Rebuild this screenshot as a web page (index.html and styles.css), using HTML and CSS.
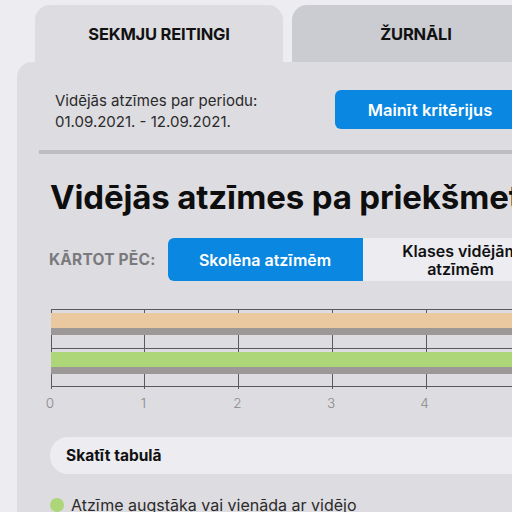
FILE: index.html
```html
<!DOCTYPE html>
<html lang="lv">
<head>
<meta charset="utf-8">
<title>Sekmju reitingi</title>
<link rel="stylesheet" href="styles.css">
</head>
<body>
<div class="page">
  <div class="tabs">
    <div class="tab tab-active">SEKMJU REITINGI</div>
    <div class="tab tab-inactive">ŽURNĀLI</div>
  </div>
  <div class="panel">
    <div class="period-row">
      <div class="period-text">Vidējās atzīmes par periodu:<br>01.09.2021. - 12.09.2021.</div>
      <button class="btn-primary">Mainīt kritērijus</button>
    </div>
    <div class="divider"></div>
    <h1 class="heading">Vidējās atzīmes pa priekšmetiem</h1>
    <div class="sort-row">
      <span class="sort-label">KĀRTOT PĒC:</span>
      <div class="segment">
        <div class="seg seg-on">Skolēna atzīmēm</div>
        <div class="seg seg-off">Klases vidējām<br>atzīmēm</div>
      </div>
    </div>
    <svg class="chart" width="490" height="115" viewBox="0 0 490 115">
      <g stroke="#5a5a5a" stroke-width="1">
        <line x1="10" y1="9.5" x2="490" y2="9.5"/>
        <line x1="10" y1="48.5" x2="490" y2="48.5"/>
        <line x1="10" y1="86.5" x2="490" y2="86.5"/>
        <line x1="10.5" y1="9" x2="10.5" y2="89"/>
        <line x1="103.5" y1="9" x2="103.5" y2="89"/>
        <line x1="197.5" y1="9" x2="197.5" y2="89"/>
        <line x1="291.5" y1="9" x2="291.5" y2="89"/>
        <line x1="385.5" y1="9" x2="385.5" y2="89"/>
        <line x1="479.5" y1="9" x2="479.5" y2="89"/>
      </g>
      <rect x="10" y="13" width="480" height="15" fill="#eac9a0"/>
      <rect x="10" y="28" width="480" height="7" fill="#9b9897"/>
      <rect x="10" y="52" width="480" height="15" fill="#acd677"/>
      <rect x="10" y="67" width="480" height="7" fill="#9b9897"/>
      <g class="axis-labels" fill="#8a8a8a" text-anchor="middle">
        <text x="9" y="108">0</text>
        <text x="102.5" y="108">1</text>
        <text x="196.5" y="108">2</text>
        <text x="290" y="108">3</text>
        <text x="383.5" y="108">4</text>
        <text x="477.5" y="108">5</text>
      </g>
    </svg>
    <div class="table-toggle">Skatīt tabulā</div>
    <div class="legend">
      <span class="dot"></span>
      <span class="legend-text">Atzīme augstāka vai vienāda ar vidējo</span>
    </div>
  </div>
</div>
</body>
</html>
```

FILE: styles.css
```css
html, body {
  margin: 0;
  padding: 0;
}
body {
  background: #ececf1;
  font-family: Inter, "Noto Sans", "Liberation Sans", sans-serif;
  color: #111;
  width: 512px;
  height: 512px;
  overflow: hidden;
}
.page {
  width: 700px;
}
.tabs {
  display: flex;
  gap: 9px;
  padding: 5px 0 0 35px;
}
.tab {
  width: 248px;
  height: 57px;
  border-radius: 15px 15px 0 0;
  display: flex;
  align-items: center;
  justify-content: center;
  font-size: 16.5px;
  font-weight: 700;
  color: #111;
  letter-spacing: -0.2px;
}
.tab-active {
  background: #dddce1;
}
.tab-inactive {
  background: #cbcbd2;
}
.panel {
  margin-left: 17px;
  background: #dddce1;
  border-top-left-radius: 15px;
  padding-top: 28px;
  height: 600px;
}
.period-row {
  display: flex;
  align-items: flex-start;
  padding-left: 38px;
}
.period-text {
  width: 280px;
  font-size: 15px;
  line-height: 21px;
  color: #2a2a2a;
}
.btn-primary {
  width: 190px;
  height: 39px;
  border: none;
  border-radius: 6px;
  background: #0a87e0;
  color: #fff;
  font-family: inherit;
  font-size: 16.5px;
  font-weight: 600;
  padding: 0;
}
.divider {
  margin: 18px 0 0 22px;
  height: 4px;
  background: #bebdc2;
}
.heading {
  margin: 23px 0 0 33px;
  font-size: 33px;
  line-height: 40px;
  font-weight: 700;
  white-space: nowrap;
  letter-spacing: -0.15px;
  color: #0e0e0e;
}
.sort-row {
  display: flex;
  align-items: center;
  margin: 21px 0 0 32px;
  gap: 12px;
}
.sort-label {
  font-size: 15.5px;
  font-weight: 700;
  color: #7a7a7d;
  letter-spacing: 0.2px;
}
.segment {
  display: flex;
  height: 43px;
}
.seg {
  width: 195px;
  display: flex;
  align-items: center;
  justify-content: center;
  text-align: center;
  font-size: 16px;
  font-weight: 600;
  line-height: 18px;
}
.seg-on {
  background: #0a87e0;
  color: #fff;
  border-radius: 6px 0 0 6px;
}
.seg-off {
  background: #ececf1;
  color: #111;
  width: 196px;
}
.chart {
  display: block;
  margin: 19px 0 0 24px;
}
.axis-labels {
  font-family: Inter, "Noto Sans", sans-serif;
  font-size: 13.5px;
  font-weight: 300;
}
.table-toggle {
  margin: 22px 0 0 33px;
  height: 37px;
  border-radius: 18px;
  background: #ececf1;
  display: flex;
  align-items: center;
  padding-left: 16px;
  font-size: 15.5px;
  font-weight: 700;
  color: #111;
}
.legend {
  display: flex;
  align-items: center;
  gap: 7px;
  margin: 21px 0 0 33px;
}
.dot {
  width: 14px;
  height: 14px;
  border-radius: 50%;
  background: #acd677;
}
.legend-text {
  font-size: 16px;
  line-height: 20px;
  color: #2a2a2a;
}
```
